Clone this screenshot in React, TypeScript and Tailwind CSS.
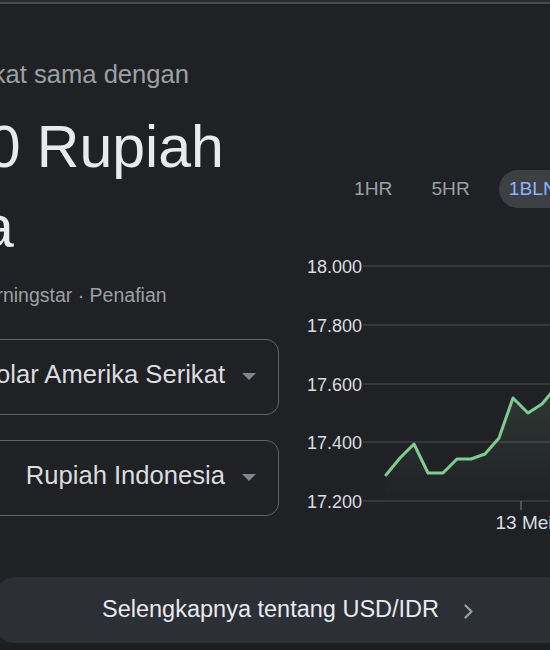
const RANGES = [
  { label: "1HR", active: false },
  { label: "5HR", active: false },
  { label: "1BLN", active: true },
  { label: "1THN", active: false },
];

const GRID = [
  { y: 26, label: "18.000" },
  { y: 85, label: "17.800" },
  { y: 144, label: "17.600" },
  { y: 202, label: "17.400" },
  { y: 261, label: "17.200" },
];

// rate points in chart coordinates
const POINTS: [number, number][] = [
  [86, 235],
  [100, 218],
  [114, 204],
  [128, 233],
  [143, 233],
  [157, 219],
  [171, 219],
  [185, 214],
  [199, 198],
  [213, 158],
  [228, 173],
  [242, 164],
  [252, 152],
  [266, 146],
  [280, 150],
];

function CurrencySelect({ label }: { label: string }) {
  return (
    <div className="flex h-[76px] w-full items-center justify-end rounded-[13px] border border-[#5f6368] pb-[5px] pr-[22px]">
      <span className="text-[25.6px] text-[#dadce0]">{label}</span>
      <svg width="14" height="7" viewBox="0 0 14 7" className="ml-[17px] mt-[3px]">
        <path d="M0 0 L14 0 L7 7 Z" fill="#80868b" />
      </svg>
    </div>
  );
}

function RateChart() {
  const line = POINTS.map(([x, y]) => `${x},${y}`).join(" ");
  const area = `${POINTS[0][0]},261 ${line} ${POINTS[POINTS.length - 1][0]},261`;

  return (
    <svg width="420" height="300" viewBox="0 0 420 300" className="block">
      <defs>
        <linearGradient id="rateFill" x1="0" y1="0" x2="0" y2="1">
          <stop offset="0%" stopColor="#81c995" stopOpacity="0.14" />
          <stop offset="100%" stopColor="#81c995" stopOpacity="0" />
        </linearGradient>
      </defs>
      {GRID.map((row) => (
        <g key={row.label}>
          <line x1="63" x2="420" y1={row.y} y2={row.y} stroke="#3c4043" strokeWidth="1.5" />
          <text
            x="62"
            y={row.y + 7}
            textAnchor="end"
            fontSize="18"
            fill="#dadce0"
            fontFamily="'Liberation Sans', Arial, sans-serif"
          >
            {row.label}
          </text>
        </g>
      ))}
      <polygon points={area} fill="url(#rateFill)" />
      <polyline
        points={line}
        fill="none"
        stroke="#81c995"
        strokeWidth="3"
        strokeLinejoin="round"
        strokeLinecap="round"
      />
      <line x1="221" x2="221" y1="261" y2="270" stroke="#5f6368" strokeWidth="1.5" />
      <text
        x="224"
        y="289"
        textAnchor="middle"
        fontSize="19"
        fill="#dadce0"
        fontFamily="'Liberation Sans', Arial, sans-serif"
      >
        13 Mei
      </text>
    </svg>
  );
}

export default function App() {
  return (
    <div className="h-[650px] w-[550px] overflow-hidden bg-[#202124] font-['Liberation_Sans',Arial,sans-serif]">
      <div className="h-[2px] bg-[#2b2c2f]" />
      <div className="h-[2px] bg-[#4a4c50]" />

      <div className="ml-[-242px] flex h-[573px] w-[1100px]">
        <div className="w-[521px] shrink-0">
          <p className="mt-[54px] text-[25.6px] leading-[32px] text-[#9aa0a6]">
            1 Dolar Amerika Serikat sama dengan
          </p>
          <p className="mt-[17px] whitespace-nowrap text-[59px] leading-[80px] text-[#e8eaed]">
            17.659,50 Rupiah
            <br />
            Indonesia
          </p>
          <p className="mt-[16px] whitespace-nowrap text-[19.5px] leading-[24px] text-[#9aa0a6]">
            4 Mei, 10.55 UTC · Dari Morningstar · Penafian
          </p>
          <div className="mt-[32px] flex flex-col gap-[25px]">
            <CurrencySelect label="Dolar Amerika Serikat" />
            <CurrencySelect label="Rupiah Indonesia" />
          </div>
        </div>

        <div className="ml-[21px] flex flex-col">
          <div className="mt-[166px] flex items-center gap-[19px] pl-[44px]">
            {RANGES.map((range) => (
              <button
                key={range.label}
                type="button"
                className={`h-[38px] rounded-full px-[10px] text-[19.2px] ${
                  range.active ? "bg-[#3c4043] text-[#8ab4f8]" : "text-[#9aa0a6]"
                }`}
              >
                {range.label}
              </button>
            ))}
          </div>
          <div className="mt-[32px]">
            <RateChart />
          </div>
        </div>
      </div>

      <div className="ml-[-5px] flex h-[66px] w-[620px] items-center rounded-[20px] bg-[#2c2f36] pl-[107px]">
        <span className="text-[23.5px] text-[#e8eaed]">Selengkapnya tentang USD/IDR</span>
        <svg width="9" height="15" viewBox="0 0 9 15" className="ml-[25px] mt-[2px]">
          <polyline
            points="1.5,1.5 7.5,7.5 1.5,13.5"
            fill="none"
            stroke="#9aa0a6"
            strokeWidth="2.2"
            strokeLinecap="round"
            strokeLinejoin="round"
          />
        </svg>
      </div>
      <div className="h-[7px] bg-[#1c1d20]" />
    </div>
  );
}
